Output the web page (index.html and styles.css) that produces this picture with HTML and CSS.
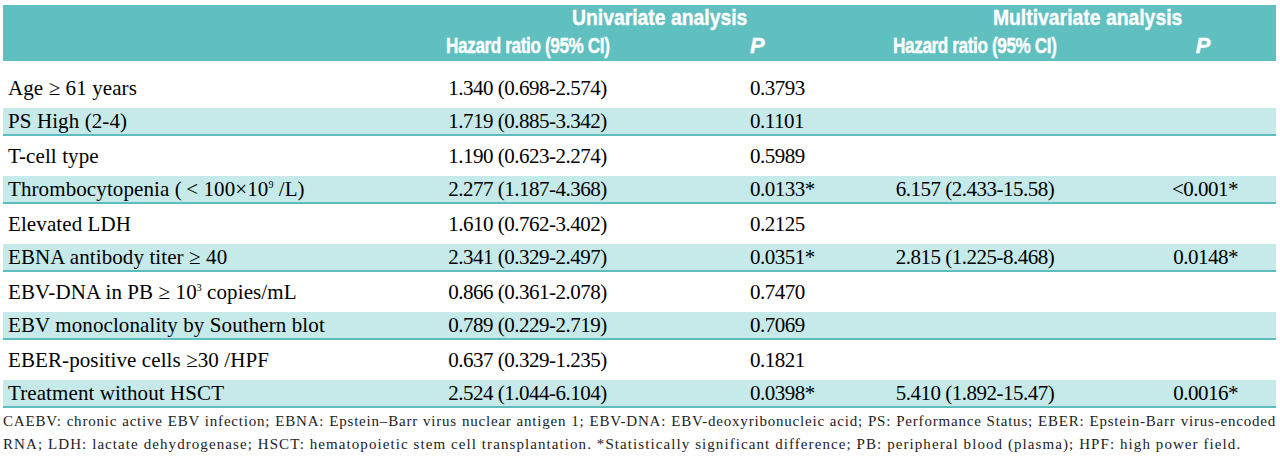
FILE: index.html
```html
<!DOCTYPE html>
<html>
<head>
<meta charset="utf-8">
<link rel="stylesheet" href="styles.css">
</head>
<body>
<div class="page">
  <div class="tbl">
    <div class="thead">
      <div class="hrow hrow1">
        <div class="hc span-uni"><span class="ht ht-top">Univariate analysis</span></div>
        <div class="hc span-multi"><span class="ht ht-top">Multivariate analysis</span></div>
      </div>
      <div class="hrow hrow2">
        <div class="c1"></div>
        <div class="hc c2"><span class="ht">Hazard ratio (95% CI)</span></div>
        <div class="c3 hp3"><span class="pi">P</span></div>
        <div class="hc c4"><span class="ht">Hazard ratio (95% CI)</span></div>
        <div class="c5 hp"><span class="pi">P</span></div>
      </div>
    </div>
    <div class="tbody">
      <div class="row">
        <div class="c1">Age ≥ 61 years</div>
        <div class="c2">1.340 (0.698-2.574)</div>
        <div class="c3">0.3793</div>
        <div class="c4"></div>
        <div class="c5"></div>
      </div>
      <div class="row alt">
        <div class="c1">PS High (2-4)</div>
        <div class="c2">1.719 (0.885-3.342)</div>
        <div class="c3">0.1101</div>
        <div class="c4"></div>
        <div class="c5"></div>
      </div>
      <div class="row">
        <div class="c1">T-cell type</div>
        <div class="c2">1.190 (0.623-2.274)</div>
        <div class="c3">0.5989</div>
        <div class="c4"></div>
        <div class="c5"></div>
      </div>
      <div class="row alt">
        <div class="c1">Thrombocytopenia (&thinsp;&lt; 100×10<sup>9</sup> /L)</div>
        <div class="c2">2.277 (1.187-4.368)</div>
        <div class="c3">0.0133*</div>
        <div class="c4">6.157 (2.433-15.58)</div>
        <div class="c5">&lt;0.001*</div>
      </div>
      <div class="row">
        <div class="c1">Elevated LDH</div>
        <div class="c2">1.610 (0.762-3.402)</div>
        <div class="c3">0.2125</div>
        <div class="c4"></div>
        <div class="c5"></div>
      </div>
      <div class="row alt">
        <div class="c1">EBNA antibody titer ≥ 40</div>
        <div class="c2">2.341 (0.329-2.497)</div>
        <div class="c3">0.0351*</div>
        <div class="c4">2.815 (1.225-8.468)</div>
        <div class="c5">0.0148*</div>
      </div>
      <div class="row">
        <div class="c1">EBV-DNA in PB ≥ 10<sup>3</sup> copies/mL</div>
        <div class="c2">0.866 (0.361-2.078)</div>
        <div class="c3">0.7470</div>
        <div class="c4"></div>
        <div class="c5"></div>
      </div>
      <div class="row alt">
        <div class="c1">EBV monoclonality by Southern blot</div>
        <div class="c2">0.789 (0.229-2.719)</div>
        <div class="c3">0.7069</div>
        <div class="c4"></div>
        <div class="c5"></div>
      </div>
      <div class="row">
        <div class="c1">EBER-positive cells ≥30 /HPF</div>
        <div class="c2">0.637 (0.329-1.235)</div>
        <div class="c3">0.1821</div>
        <div class="c4"></div>
        <div class="c5"></div>
      </div>
      <div class="row alt">
        <div class="c1">Treatment without HSCT</div>
        <div class="c2">2.524 (1.044-6.104)</div>
        <div class="c3">0.0398*</div>
        <div class="c4">5.410 (1.892-15.47)</div>
        <div class="c5">0.0016*</div>
      </div>
    </div>
  </div>
  <div class="notes">
    <div class="note-line justified">CAEBV: chronic active EBV infection; EBNA: Epstein–Barr virus nuclear antigen 1; EBV-DNA: EBV-deoxyribonucleic acid; PS: Performance Status; EBER: Epstein-Barr virus-encoded</div>
    <div class="note-line">RNA; LDH: lactate dehydrogenase; HSCT: hematopoietic stem cell transplantation. *Statistically significant difference; PB: peripheral blood (plasma); HPF: high power field.</div>
  </div>
</div>
</body>
</html>
```

FILE: styles.css
```css
html, body {
  margin: 0;
  padding: 0;
  background: #ffffff;
}

.page {
  width: 1280px;
  height: 456px;
  padding: 5px 4px 0 3px;
  box-sizing: border-box;
  overflow: hidden;
}

.tbl {
  width: 1273px;
}

.thead {
  background: #60bfbf;
  color: #ffffff;
  font-family: "Liberation Sans", Arial, sans-serif;
  font-weight: bold;
  font-size: 22px;
  white-space: nowrap;
  -webkit-text-stroke: 0.4px #ffffff;
}

.hc {
  display: flex;
  justify-content: center;
}

.ht {
  display: inline-block;
  transform: scaleX(0.78);
  transform-origin: center;
}

.ht-top {
  transform: scaleX(0.88);
}

.hrow,
.row {
  display: grid;
  grid-template-columns: 437px 175px 265px 190px 206px;
  align-items: center;
}

.hrow1 {
  height: 26px;
  line-height: 26px;
}

.hrow2 {
  height: 30px;
  line-height: 30px;
}

.span-uni {
  grid-column: 2 / 4;
}

.span-multi {
  grid-column: 4 / 6;
  padding-left: 20px;
}

.pi {
  font-style: italic;
}

.hp3 {
  padding-left: 132px;
}

.tbody {
  padding-top: 10px;
  font-family: "Liberation Serif", "Times New Roman", serif;
  font-size: 21px;
  color: #000000;
}

.row {
  height: 34px;
  line-height: 34px;
  white-space: nowrap;
}

.row.alt {
  height: 26px;
  line-height: 26px;
  margin: 3px 0;
  background: #c6e9e9;
  border-bottom: 2px solid #5fbcbc;
}

.c1 {
  padding-left: 5px;
  letter-spacing: 0.1px;
}

.c2,
.c4 {
  text-align: center;
}

.c2,
.c3,
.c4,
.c5 {
  letter-spacing: -0.5px;
}

.c3 {
  padding-left: 135px;
}

.c5 {
  text-align: right;
  padding-right: 38px;
}

.c5.hp {
  padding-right: 66px;
}

sup {
  font-size: 10px;
  line-height: 0;
  vertical-align: 8px;
  letter-spacing: 0;
}

.notes {
  margin-top: -1px;
  font-family: "Liberation Serif", "Times New Roman", serif;
  font-size: 15px;
  line-height: 23px;
  letter-spacing: 1.08px;
  color: #222222;
  width: 1273px;
}

.note-line {
  white-space: nowrap;
}

.note-line.justified {
  text-align: justify;
  text-align-last: justify;
  letter-spacing: 0.8px;
  word-spacing: -3px;
}
```
